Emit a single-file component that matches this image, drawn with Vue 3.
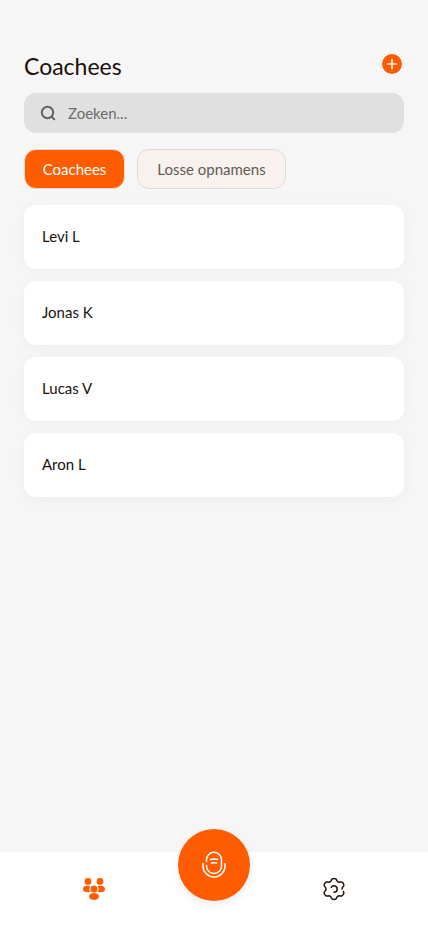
<script setup>
import { ref } from 'vue'

const query = ref('')
const tab = ref('coachees')
const coachees = ['Levi L', 'Jonas K', 'Lucas V', 'Aron L']
</script>

<template>
  <div class="screen">
    <main class="content">
      <header class="head">
        <h1>Coachees</h1>
        <button class="add" type="button" aria-label="Coachee toevoegen">
          <svg width="20" height="20" viewBox="0 0 20 20" aria-hidden="true">
            <circle cx="10" cy="10" r="10" fill="#ff5c00" />
            <path d="M10 5.500v9M5.500 10h9" stroke="#ffeade" stroke-width="1.700" stroke-linecap="round" />
          </svg>
        </button>
      </header>

      <label class="search">
        <svg width="16" height="16" viewBox="0 0 16 16" fill="none" stroke="#656260" stroke-width="2" stroke-linecap="round" aria-hidden="true">
          <circle cx="7.500" cy="7.500" r="5.700" />
          <path d="M11.600 11.600l2.600 2.600" />
        </svg>
        <input v-model="query" type="text" placeholder="Zoeken..." aria-label="Zoeken" />
      </label>

      <div class="tabs">
        <button type="button" :class="['tab', { active: tab === 'coachees' }]" @click="tab = 'coachees'">Coachees</button>
        <button type="button" :class="['tab', { active: tab === 'losse' }]" @click="tab = 'losse'">Losse opnamens</button>
      </div>

      <ul class="list">
        <li v-for="name in coachees" :key="name">
          <button class="card" type="button">{{ name }}</button>
        </li>
      </ul>
    </main>

    <nav class="bar">
      <button class="item" type="button" aria-label="Coachees">
        <svg width="24" height="24" viewBox="0 0 24 24" fill="#ff5c00" aria-hidden="true">
          <circle cx="6" cy="4.400" r="3.400" />
          <circle cx="18" cy="4.400" r="3.400" />
          <ellipse cx="5.700" cy="12" rx="4.700" ry="3.200" />
          <ellipse cx="18.300" cy="12" rx="4.700" ry="3.200" />
          <circle cx="12" cy="12" r="4.700" fill="#ffffff" />
          <circle cx="12" cy="12" r="3.500" />
          <ellipse cx="12" cy="19.500" rx="5" ry="3.400" />
        </svg>
      </button>
      <button class="record" type="button" aria-label="Opnemen">
        <svg width="30" height="30" viewBox="0 0 30 30" fill="none" stroke="#ffffff" stroke-width="1.500" stroke-linecap="round" aria-hidden="true">
          <path d="M7.500 11.500V9.800a7.500 7.500 0 0 1 15 0v6.200a7.500 7.500 0 0 1-15 0v-.500" />
          <path d="M4 13.500v2.500a11 11 0 0 0 22 0v-2.500" />
          <path d="M11.500 9.500c2.400-.8 4.600-.8 7 0M12.500 13c1.700-.5 3.300-.5 5 0" />
        </svg>
      </button>
      <button class="item" type="button" aria-label="Instellingen">
        <svg width="24" height="24" viewBox="0 0 24 24" fill="none" stroke="#20110a" stroke-width="1.500" stroke-linecap="round" stroke-linejoin="round" aria-hidden="true">
          <path d="M21.400 14.600C22.600 15.800 21.200 18.400 19.600 19C18.800 19.400 18 18.800 16.700 18.800C15 19.200 14.800 20.200 14.500 21.200C14.200 22.900 9.800 22.900 9.500 21.200C9.200 20.200 9 19.200 7.300 18.800C6 18.800 5.200 19.400 4.400 19C2.800 18.400 1.400 15.800 2.500 14.700C3.500 13.800 4 13.100 4 12C4 10.900 3.500 10.200 2.500 9.300C1.400 8.200 2.800 5.600 4.400 5C5.200 4.600 6 5.200 7.300 5.200C9 4.800 9.200 3.800 9.500 2.800C9.800 1.100 14.200 1.100 14.500 2.800C14.800 3.800 15 4.800 16.700 5.200C18 5.200 18.800 4.600 19.600 5C21.200 5.600 22.600 8.200 21.500 9.300C20.500 10.200 20 10.900 20 12" />
          <path d="M9.200 10.500a3.200 3.200 0 1 1 2.800 4.700" />
        </svg>
      </button>
    </nav>
  </div>
</template>

<style>
body {
  background: #f6f6f6;
}
</style>

<style scoped>
.screen {
  display: flex;
  flex-direction: column;
  min-height: 100vh;
  color: #20110a;
  font-family: Lato, "Open Sans", sans-serif;
}

button,
input {
  padding: 0;
  border: 0;
  background: none;
  color: inherit;
  font: inherit;
}

button {
  cursor: pointer;
}

svg {
  display: block;
  flex: none;
}

.content {
  flex: 1;
  padding: 48px 24px 24px;
}

.head {
  display: flex;
  justify-content: space-between;
  padding-right: 2px;
}

h1 {
  margin: 0;
  font-size: 23px;
  font-weight: 400;
  line-height: 36px;
}

.add {
  align-self: center;
  margin-bottom: 4px;
}

.search {
  display: flex;
  align-items: center;
  gap: 12px;
  height: 40px;
  margin-top: 9px;
  padding: 0 16px;
  border-radius: 12px;
  background: #e0e0e0;
}

.search input {
  flex: 1;
  min-width: 0;
  outline: none;
  font-size: 15px;
  line-height: 24px;
}

.search input::placeholder {
  color: #6f6b69;
  opacity: 1;
}

.tabs {
  display: grid;
  grid-template-columns: 101px 149px;
  gap: 12px;
  margin-top: 16px;
}

.tab {
  height: 40px;
  border: 1px solid #dedcdb;
  border-radius: 12px;
  background: #f9f1ed;
  color: #625c59;
  font-size: 15px;
}

.tab.active {
  background: #ff5c00;
  color: #ffffff;
}

.list {
  display: flex;
  flex-direction: column;
  gap: 12px;
  margin: 16px 0 0;
  padding: 0;
  list-style: none;
}

.card {
  display: block;
  width: 100%;
  height: 64px;
  padding: 0 18px 2px;
  border-radius: 12px;
  background: #ffffff;
  box-shadow: 0 2px 14px rgba(0, 0, 0, 0.04);
  font-size: 15px;
  text-align: left;
}

.bar {
  display: grid;
  grid-template-rows: 74px;
  grid-template-columns: repeat(3, 1fr);
  justify-items: center;
  align-items: center;
  padding: 0 34px;
  background: #ffffff;
}

.record {
  display: flex;
  align-items: center;
  justify-content: center;
  width: 72px;
  height: 72px;
  margin-bottom: 48px;
  border-radius: 50%;
  background: #ff5c00;
  box-shadow: 0 4px 8px rgba(0, 0, 0, 0.08);
}
</style>
